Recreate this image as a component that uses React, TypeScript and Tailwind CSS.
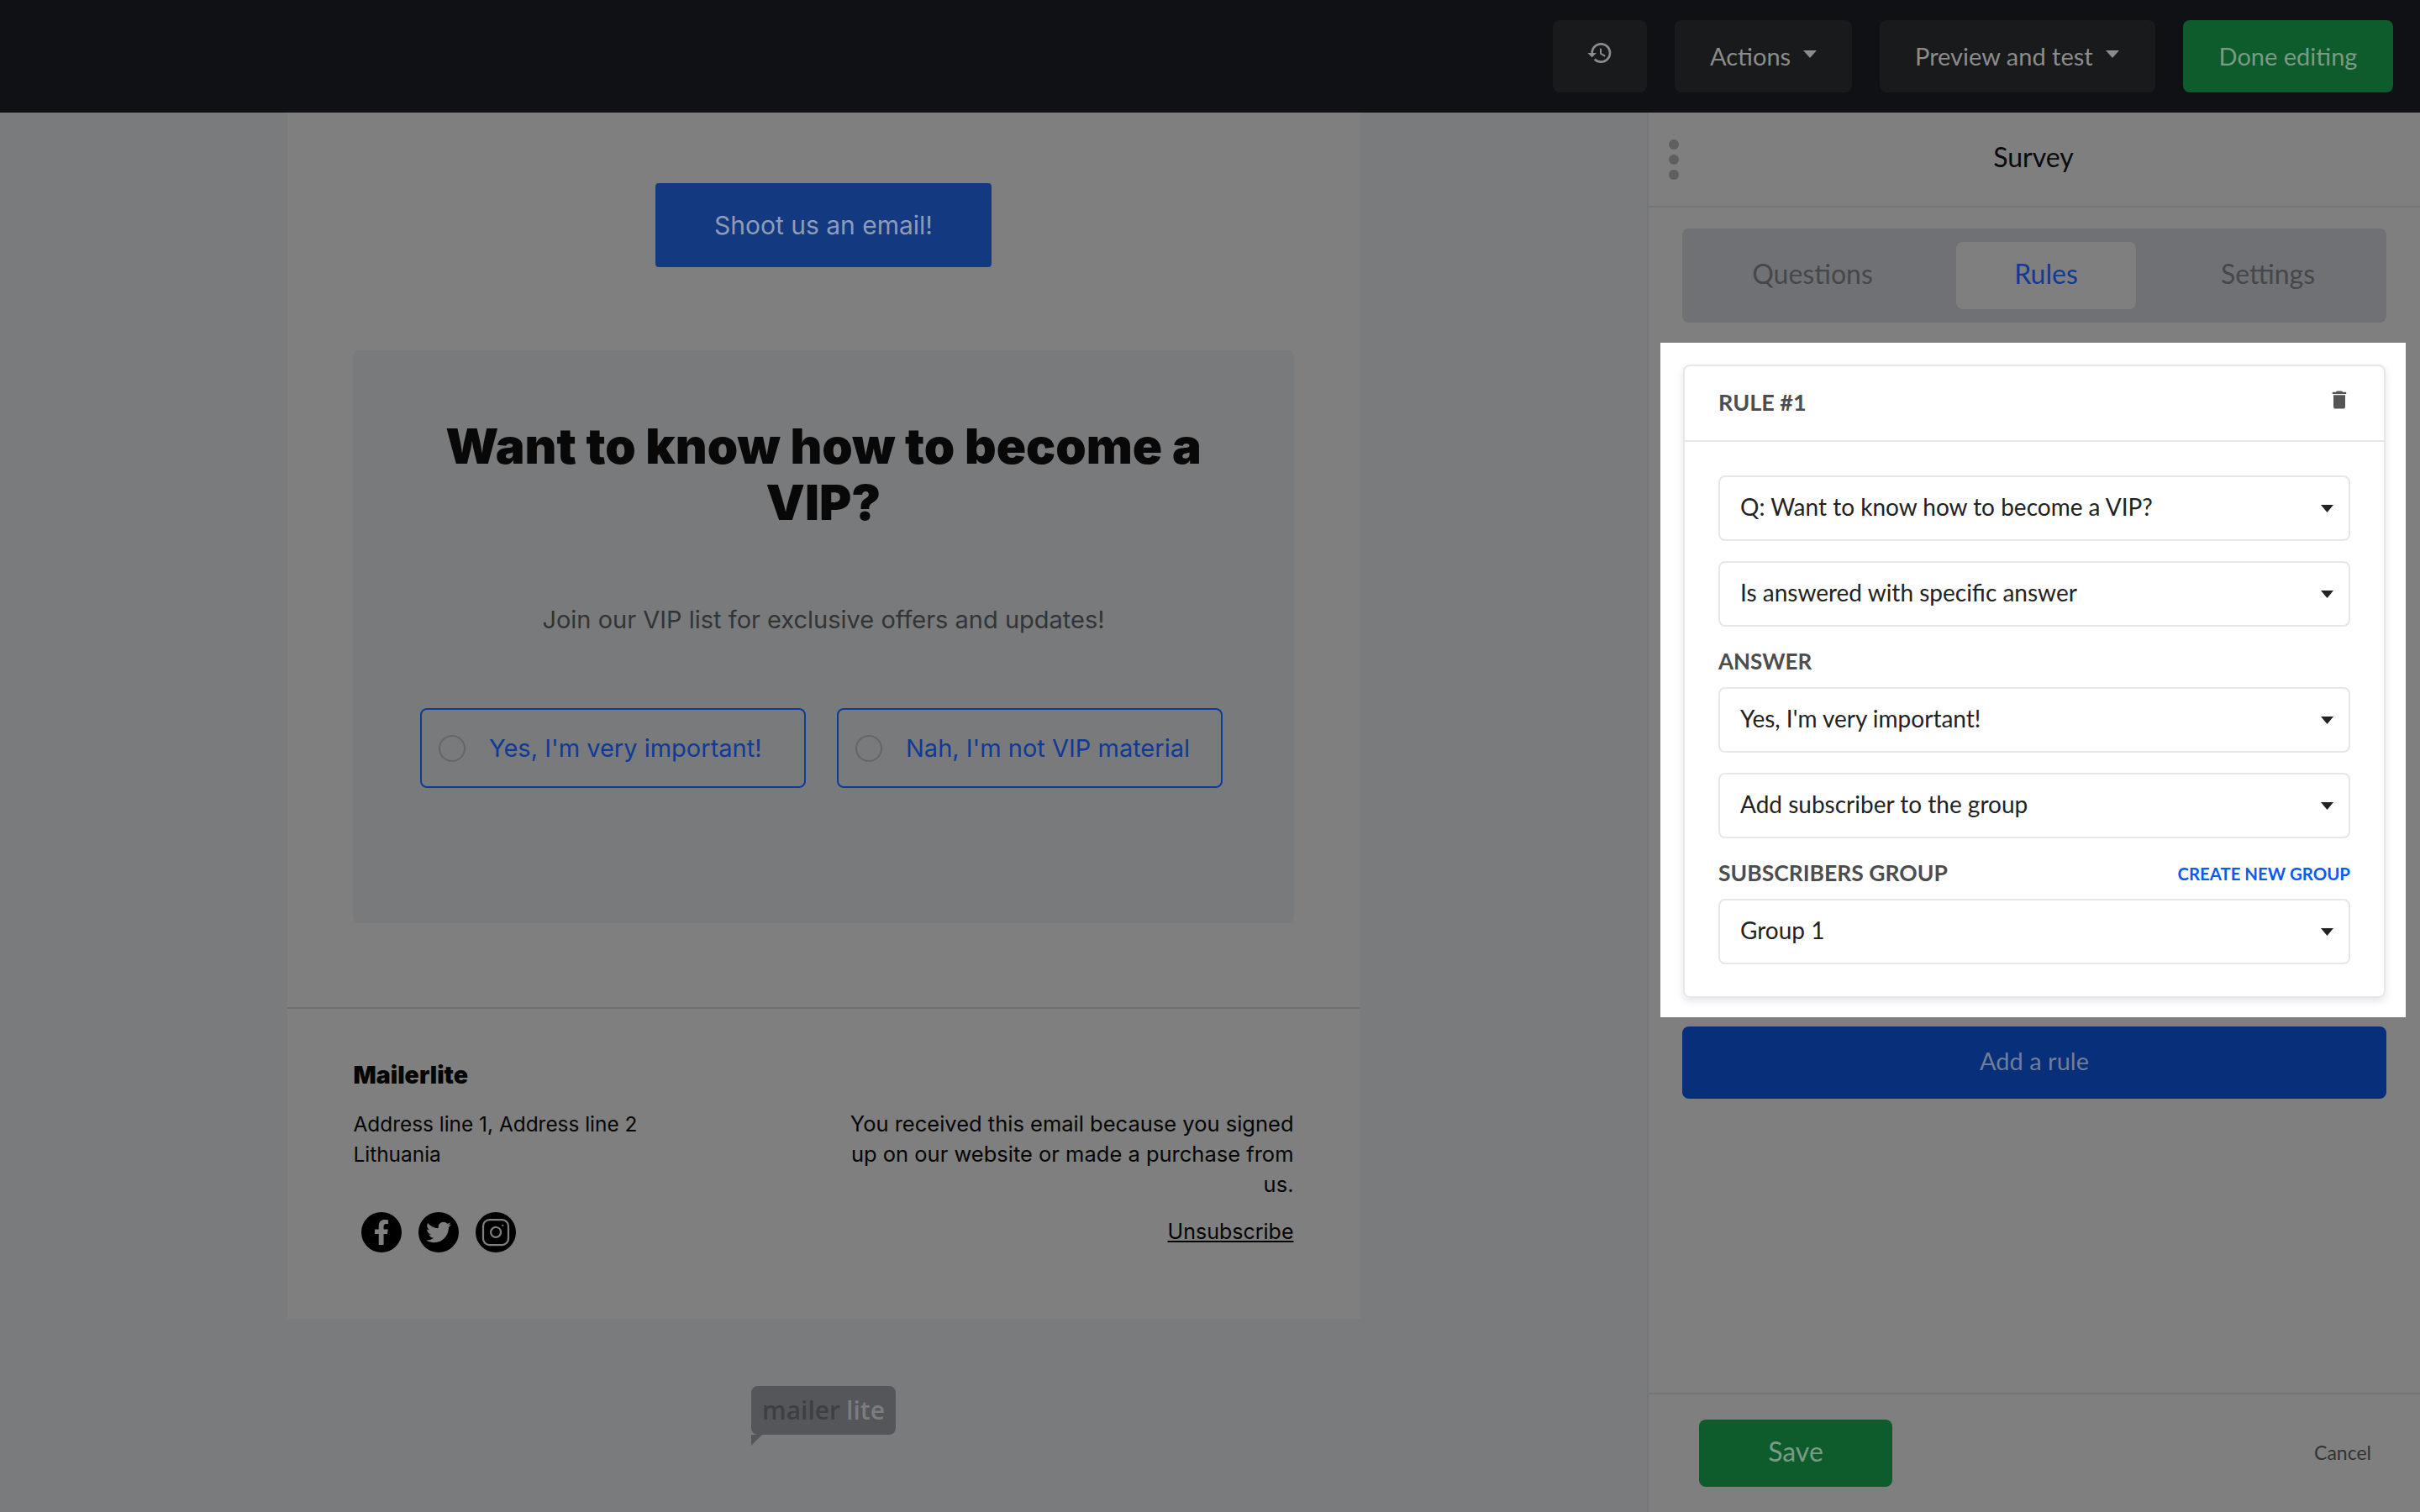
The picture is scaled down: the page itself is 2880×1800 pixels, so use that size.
import { Instagram } from "lucide-react";
import { FaFacebookF, FaTwitter } from "react-icons/fa";
import { MdDelete, MdHistory } from "react-icons/md";

const ui = "font-['Lato','Liberation_Sans',sans-serif]";
const poppins = "font-['Inter','Liberation_Sans',sans-serif]";

function Caret({ className }: { className: string }) {
  return (
    <svg className={className} viewBox="0 0 10 6" preserveAspectRatio="none">
      <path d="M0 0h10L5 6z" fill="currentColor" />
    </svg>
  );
}

function TopButton({ label, width, pad }: { label: string; width: string; pad: string }) {
  return (
    <button className={`flex h-[86px] items-center rounded-lg bg-[#191a1b] text-[29px] text-[#8c8c8c] ${width} ${pad}`}>
      <span>{label}</span>
      <Caret className="mb-1.5 ml-[15px] h-[9px] w-[16px] text-[#8c8c8c]" />
    </button>
  );
}

function SelectBox({ value }: { value: string }) {
  return (
    <div className="flex h-[78px] items-center justify-between rounded-lg border-2 border-[#e6e7eb] pl-[24px] pr-[18px] text-[28px] text-[#222222]">
      <span className="pb-[4px]">{value}</span>
      <Caret className="h-[9px] w-[15px] text-[#222222]" />
    </div>
  );
}

function Option({ label }: { label: string }) {
  return (
    <div className="flex h-[95px] w-[459px] items-center rounded-lg border-2 border-[#0f3a96] pl-[20px]">
      <span className="mr-[28px] h-[32px] w-[32px] shrink-0 rounded-full border-2 border-[#666666]" />
      <span className="whitespace-nowrap text-[29px] text-[#0f3a96]">{label}</span>
    </div>
  );
}

function Social({ children }: { children: React.ReactNode }) {
  return (
    <span className="flex h-[48px] w-[48px] items-center justify-center rounded-full bg-black text-[#7f7f7f]">
      {children}
    </span>
  );
}

function Email() {
  return (
    <div className={`mx-auto w-[1277px] bg-[#7f7f7f] pt-[84px] ${poppins}`}>
      <button className="mx-auto block h-[100px] w-[400px] rounded bg-[#133a80] text-[30px] text-[#8d9cb8]">
        Shoot us an email!
      </button>
      <div className="mx-auto mt-[99px] h-[682px] w-[1120px] rounded-lg bg-[#797a7c] px-[80px] pt-[80px]">
        <h1 className="text-center text-[58.4px] font-black leading-[67px] text-[#080808]">
          Want to know how to become a<br />VIP?
        </h1>
        <p className="mt-[83px] text-center text-[29px] leading-[48px] text-[#333435]">
          Join our VIP list for exclusive offers and updates!
        </p>
        <div className="mt-[81px] flex gap-[37px]">
          <Option label="Yes, I'm very important!" />
          <Option label="Nah, I'm not VIP material" />
        </div>
      </div>
      <div className="mt-[100px] flex h-[371px] justify-between border-t-2 border-[#6f7072] px-[79px] pt-[61px] text-[25.5px] leading-[36px] text-[#050505]">
        <div>
          <div className="text-[28.5px] font-black">Mailerlite</div>
          <p className="mt-[22px] text-[24.4px]">
            Address line 1, Address line 2
            <br />
            Lithuania
          </p>
          <div className="ml-[9px] mt-[51px] flex gap-[20px]">
            <Social>
              <FaFacebookF size={30} />
            </Social>
            <Social>
              <FaTwitter size={30} />
            </Social>
            <Social>
              <Instagram size={36} strokeWidth={1.5} />
            </Social>
          </div>
        </div>
        <div className="pt-[58px] text-right">
          <p>
            You received this email because you signed
            <br />
            up on our website or made a purchase from
            <br />
            us.
          </p>
          <a className="mt-[20px] block text-[25px] underline">Unsubscribe</a>
        </div>
      </div>
    </div>
  );
}

function Logo() {
  return (
    <div className="relative mx-auto mt-[80px] flex h-[58px] w-[172px] items-center justify-center rounded-lg bg-[#54565a] font-['Open_Sans',sans-serif] text-[30px] font-semibold leading-none">
      <span className="text-[#3d4043]">mailer</span>
      <span className="ml-[7px] text-[#7b7c7e]">lite</span>
      <svg className="absolute left-0 top-[58px] h-[13px] w-[13px]" viewBox="0 0 13 13">
        <path d="M0 0h13L0 13z" fill="#54565a" />
      </svg>
    </div>
  );
}

function Panel() {
  return (
    <aside className={`flex w-[920px] flex-col border-l-2 border-[#75767a] bg-[#7f7f7f] ${ui}`}>
      <div className="relative flex h-[113px] shrink-0 items-center justify-center border-b-2 border-[#74757c] pb-[5px] pr-[2px] text-[32px] text-[#0a0a0a]">
        <div className="absolute left-[24px] top-[32px] flex flex-col gap-[6px]">
          <span className="h-[12px] w-[12px] rounded-full bg-[#5f5f5f]" />
          <span className="h-[12px] w-[12px] rounded-full bg-[#5f5f5f]" />
          <span className="h-[12px] w-[12px] rounded-full bg-[#5f5f5f]" />
        </div>
        Survey
      </div>
      <div className="mx-[40px] mt-[25px] flex h-[112px] shrink-0 items-center gap-8 rounded-lg bg-[#6f7175] px-4 text-[32px] text-[#46474a]">
        <div className="w-[278px] pb-[4px] text-center">Questions</div>
        <div className="flex h-[80px] w-[214px] items-center justify-center rounded-lg bg-[#7f7f7f] pb-[4px] text-[#0f3a96]">
          Rules
        </div>
        <div className="w-[250px] pb-[4px] text-center">Settings</div>
      </div>
      <div className="ml-[14px] mt-[24px] w-[887px] shrink-0 bg-white pb-[23px] pl-[27px] pr-[24px] pt-[26px]">
        <div className="rounded-lg border-2 border-[#e6e7eb] shadow-[0_4px_10px_rgba(30,40,70,0.12)]">
          <div className="flex h-[90px] items-center justify-between border-b-2 border-[#e6e7eb] pl-[40px] pr-[39px] text-[27px] font-bold text-[#4d4d4d]">
            <span className="pb-[2px]">RULE #1</span>
            <MdDelete size={28} className="mb-[8px] text-[#555555]" />
          </div>
          <div className="px-[40px] pb-[38px] pt-[40px]">
            <div className="flex flex-col gap-[24px]">
              <SelectBox value="Q: Want to know how to become a VIP?" />
              <SelectBox value="Is answered with specific answer" />
            </div>
            <div className="mb-[14px] mt-[26px] h-[32px] text-[26px] font-bold leading-[30px] text-[#4d4d4d]">ANSWER</div>
            <div className="flex flex-col gap-[24px]">
              <SelectBox value="Yes, I'm very important!" />
              <SelectBox value="Add subscriber to the group" />
            </div>
            <div className="mb-[14px] mt-[26px] flex h-[32px] items-center justify-between font-bold">
              <span className="text-[26.5px] text-[#4d4d4d]">SUBSCRIBERS GROUP</span>
              <span className="text-[20.4px] text-[#0a5cf0]">CREATE NEW GROUP</span>
            </div>
            <SelectBox value="Group 1" />
          </div>
        </div>
      </div>
      <button className="mx-[40px] mt-[11px] h-[86px] shrink-0 rounded-lg bg-[#072f7a] pb-[4px] text-[29px] text-[#6e7e98]">
        Add a rule
      </button>
      <div className="mt-auto flex h-[142px] shrink-0 items-start justify-between border-t-2 border-[#74757c] pl-[60px] pr-[58px] pt-[30px]">
        <button className="h-[80px] w-[230px] rounded-lg bg-[#0e5c2c] pb-[4px] text-[32px] text-[#7b9a85]">Save</button>
        <span className="mt-[22px] text-[23px] text-[#333333]">Cancel</span>
      </div>
    </aside>
  );
}

export default function App() {
  return (
    <div className="flex h-[1800px] w-[2880px] flex-col overflow-hidden bg-[#797b7d]">
      <header className={`flex h-[134px] shrink-0 items-center justify-end gap-[33px] bg-[#0f1114] pr-[32px] ${ui}`}>
        <button className="flex h-[86px] w-[112px] items-center justify-center rounded-lg bg-[#191a1b] text-[#8c8c8c]">
          <MdHistory size={32} className="mb-2" />
        </button>
        <TopButton label="Actions" width="w-[211px]" pad="pl-[42px]" />
        <TopButton label="Preview and test" width="w-[328px]" pad="pl-[42px]" />
        <button className="h-[86px] w-[250px] rounded-lg bg-[#0e5c2c] text-[29px] text-[#7b9a85]">Done editing</button>
      </header>
      <div className="flex min-h-0 flex-1">
        <main className="w-[1960px]">
          <Email />
          <Logo />
        </main>
        <Panel />
      </div>
    </div>
  );
}
